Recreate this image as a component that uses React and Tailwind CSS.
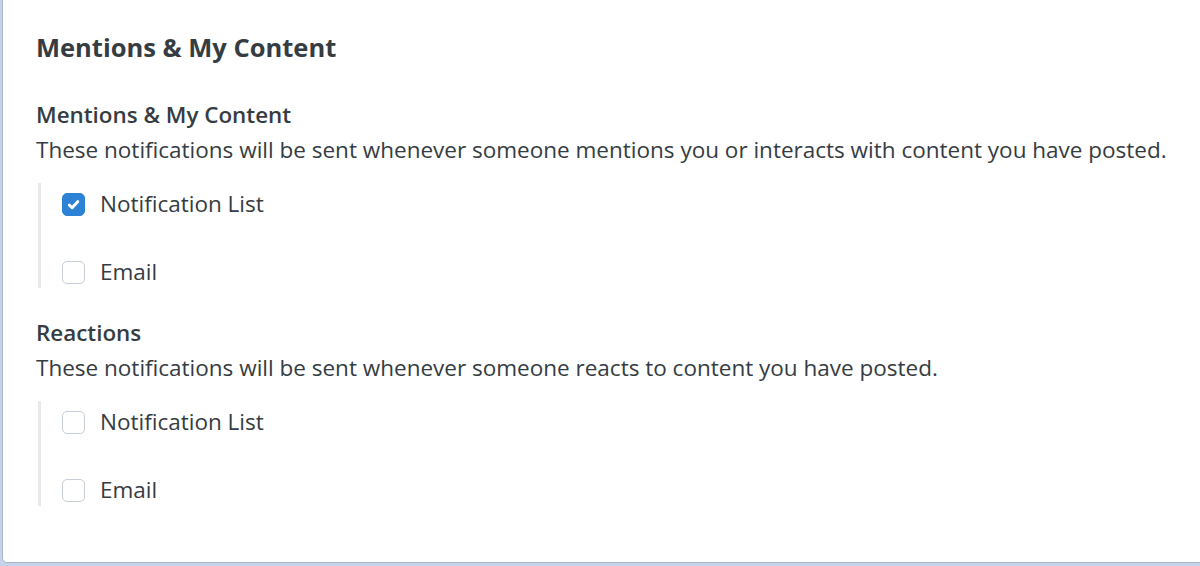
import React, { useState } from "react";

const sections = [
  {
    title: "Mentions & My Content",
    text: "These notifications will be sent whenever someone mentions you or interacts with content you have posted.",
    options: { list: true, email: false },
  },
  {
    title: "Reactions",
    text: "These notifications will be sent whenever someone reacts to content you have posted.",
    options: { list: false, email: false },
  },
];

const Checkbox = ({ checked, onChange, label }) => (
  <label className="flex items-center h-[42px] shrink-0 cursor-pointer">
    <span
      onClick={onChange}
      className={
        checked
          ? "w-[23px] h-[23px] rounded-[5px] bg-[#2d82d6] border border-[#2d82d6] flex items-center justify-center"
          : "w-[23px] h-[23px] rounded-[5px] bg-white border border-[#c8ced6] flex items-center justify-center"
      }
    >
      {checked && (
        <svg viewBox="0 0 16 16" className="w-[15px] h-[15px]" fill="none" stroke="white" strokeWidth={3.2} strokeLinecap="round" strokeLinejoin="round">
          <path d="M3.5 8.5l3 3 6-6.5" />
        </svg>
      )}
    </span>
    <span className="ml-[15px] text-[22.5px] leading-[32px] text-[#353c42]">{label}</span>
  </label>
);

const Section = ({ section }) => {
  const [opts, setOpts] = useState(section.options);
  return (
    <div>
      <h3 className="text-[22.4px] font-semibold text-[#353c42] leading-[32px]">{section.title}</h3>
      <p className="text-[22.5px] text-[#353c42] leading-[32px] mt-[3px] whitespace-nowrap">{section.text}</p>
      <div className="mt-[17px] ml-[2px] border-l-[3px] border-[#e8e9eb] h-[105px] pl-[21px] flex flex-col gap-[26px]">
        <Checkbox checked={opts.list} onChange={() => setOpts({ ...opts, list: !opts.list })} label="Notification List" />
        <Checkbox checked={opts.email} onChange={() => setOpts({ ...opts, email: !opts.email })} label="Email" />
      </div>
    </div>
  );
};

export default function App() {
  return (
    <div className="w-[1200px] h-[566px] overflow-hidden bg-[#c4d3e8]" style={{ fontFamily: "'Open Sans', sans-serif" }}>
      <div className="ml-[2px] -mt-[4px] w-[1220px] h-[567px] bg-white border border-[#a9b6c8] rounded-[5px] pl-[33px] pt-[34px]">
        <h2 className="text-[25.5px] font-bold text-[#353c42] leading-[32px]">Mentions &amp; My Content</h2>
        <div className="mt-[36px] flex flex-col gap-[29px]">
          {sections.map((s) => (
            <Section key={s.title} section={s} />
          ))}
        </div>
      </div>
    </div>
  );
}
